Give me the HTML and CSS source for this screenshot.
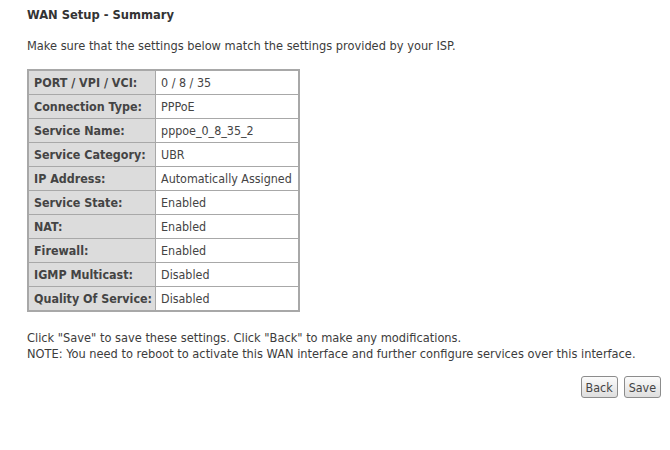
FILE: index.html
```html
<!DOCTYPE html>
<html>
<head>
<meta charset="utf-8">
<link rel="stylesheet" href="styles.css">
</head>
<body>
<div class="page">
  <h1 class="title">WAN Setup - Summary</h1>
  <p class="intro">Make sure that the settings below match the settings provided by your ISP.</p>
  <table class="summary">
    <tr><th>PORT / VPI / VCI:</th><td>0 / 8 / 35</td></tr>
    <tr><th>Connection Type:</th><td>PPPoE</td></tr>
    <tr><th>Service Name:</th><td>pppoe_0_8_35_2</td></tr>
    <tr><th>Service Category:</th><td>UBR</td></tr>
    <tr><th>IP Address:</th><td>Automatically Assigned</td></tr>
    <tr><th>Service State:</th><td>Enabled</td></tr>
    <tr><th>NAT:</th><td>Enabled</td></tr>
    <tr><th>Firewall:</th><td>Enabled</td></tr>
    <tr><th>IGMP Multicast:</th><td>Disabled</td></tr>
    <tr><th>Quality Of Service:</th><td>Disabled</td></tr>
  </table>
  <p class="note">Click "Save" to save these settings. Click "Back" to make any modifications.<br>NOTE: You need to reboot to activate this WAN interface and further configure services over this interface.</p>
  <div class="actions">
    <button class="btn">Back</button>
    <button class="btn">Save</button>
  </div>
</div>
</body>
</html>
```
FILE: styles.css
```css
html, body {
  margin: 0;
  padding: 0;
  background: #ffffff;
}
.page {
  padding: 6px 9px 0 27px;
  font-family: "DejaVu Sans Condensed", "DejaVu Sans", sans-serif;
  font-size: 12.7px;
  color: #3c3c3c;
}
.title {
  margin: 0;
  font-size: 12.8px;
  font-weight: bold;
  line-height: 18px;
  color: #333;
}
.intro {
  margin: 14px 0 0 0;
  line-height: 16px;
}
.summary {
  margin-top: 15px;
  border-collapse: collapse;
  border: 2px solid #a8a8a8;
  font-size: 12.4px;
}
.summary th, .summary td {
  border: 1px solid #a8a8a8;
  height: 23px;
  padding: 0 3px 0 5px;
  text-align: left;
  white-space: nowrap;
}
.summary th {
  background: #dcdcdc;
  font-weight: bold;
  color: #444;
}
.summary td {
  width: 134px;
  color: #444;
}
.note {
  margin: 18px 0 0 0;
  line-height: 16px;
}
.actions {
  display: flex;
  justify-content: flex-end;
  gap: 6px;
  margin-top: 14px;
}
.btn {
  font-family: "DejaVu Sans Condensed", "DejaVu Sans", sans-serif;
  font-size: 12.4px;
  color: #444;
  height: 22px;
  padding: 0 4px;
  border: 1px solid #8c8c8c;
  border-radius: 3px;
  background: linear-gradient(#fbfbfb, #dedede);
}
```
